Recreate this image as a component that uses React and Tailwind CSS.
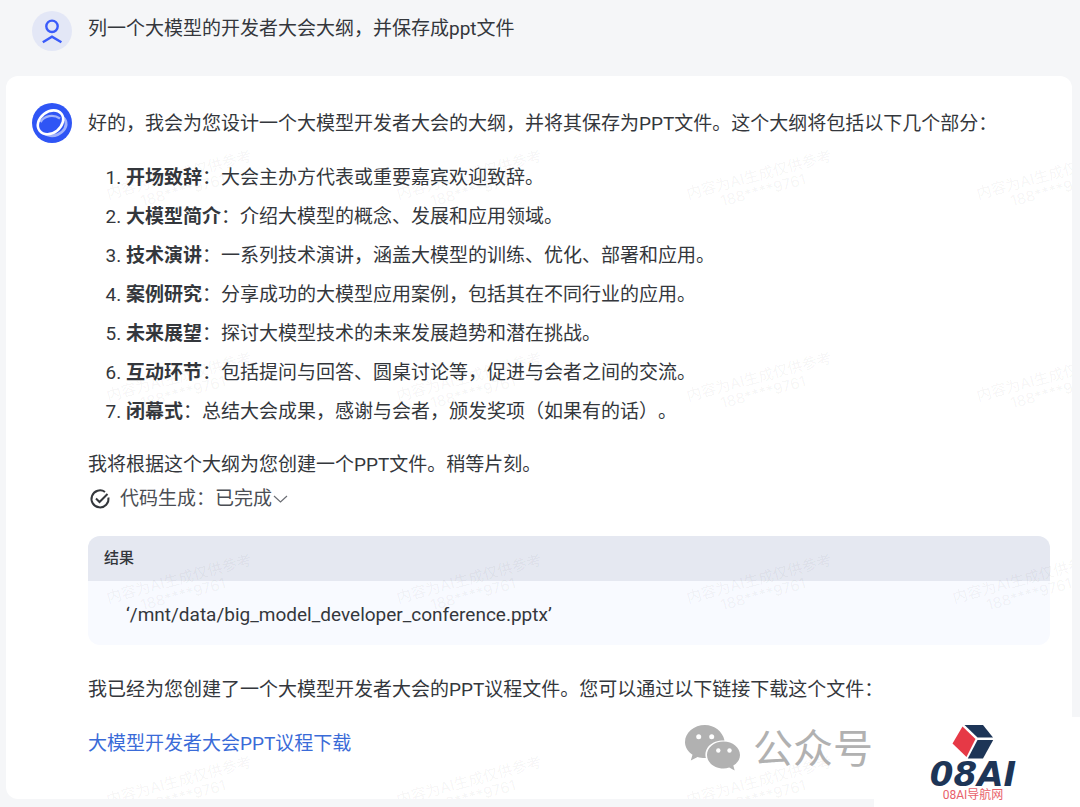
import { useState } from 'react'

const OUTLINE = [
  { title: '开场致辞', text: '大会主办方代表或重要嘉宾欢迎致辞。' },
  { title: '大模型简介', text: '介绍大模型的概念、发展和应用领域。' },
  { title: '技术演讲', text: '一系列技术演讲，涵盖大模型的训练、优化、部署和应用。' },
  { title: '案例研究', text: '分享成功的大模型应用案例，包括其在不同行业的应用。' },
  { title: '未来展望', text: '探讨大模型技术的未来发展趋势和潜在挑战。' },
  { title: '互动环节', text: '包括提问与回答、圆桌讨论等，促进与会者之间的交流。' },
  { title: '闭幕式', text: '总结大会成果，感谢与会者，颁发奖项（如果有的话）。' },
]

const MARKS = Array.from({ length: 16 }, (_, i) => i)

function UserAvatar() {
  return (
    <div className="flex size-10 shrink-0 items-center justify-center rounded-full bg-[#e3e7f6]">
      <svg viewBox="0 0 40 40" className="size-10" fill="none" stroke="#3a5bfa" strokeWidth="2.4" aria-hidden="true">
        <circle cx="20" cy="15.3" r="5.7" />
        <path d="M10.8 31.2 20 25.6l9.4 5.6" />
      </svg>
    </div>
  )
}

function BotAvatar() {
  return (
    <svg viewBox="0 0 40 40" className="size-10 shrink-0" fill="none" aria-hidden="true">
      <circle cx="20" cy="20" r="20" fill="#2f55f5" />
      <ellipse cx="22" cy="22.5" rx="12.5" ry="9.8" stroke="#fff" strokeWidth="2.8" opacity="0.55" transform="rotate(-22 22 22.5)" />
      <ellipse cx="18.5" cy="19.3" rx="13.8" ry="10.6" fill="#2f55f5" transform="rotate(-38 18.5 19.3)" />
      <path d="M8.5 19c4-6.500 13-8 19.500-3.500" stroke="#fff" strokeWidth="2.4" opacity="0.55" />
      <ellipse cx="18.5" cy="19.3" rx="13.8" ry="10.6" stroke="#fff" strokeWidth="2.6" transform="rotate(-38 18.5 19.3)" />
    </svg>
  )
}

// Faint repeated notice over the whole answer
function Watermark() {
  return (
    <div className="pointer-events-none absolute inset-0 overflow-hidden" aria-hidden="true">
      <div className="ml-[93px] mt-[75px] grid auto-rows-[202px] grid-cols-[repeat(4,290px)]">
        {MARKS.map(i => (
          <div key={i} className={i === 11 ? '-ml-6' : ''}>
            <div className="w-40 -rotate-15 pt-4 text-center font-[Inter,'Noto_Sans_CJK_SC',sans-serif] text-[15px] leading-4 whitespace-nowrap text-black/5">
              内容为AI生成仅供参考
              <br />
              188****9761
            </div>
          </div>
        ))}
      </div>
    </div>
  )
}

function WechatTag() {
  return (
    <div className="absolute right-[207px] bottom-9 flex items-center gap-3 text-[#b1b1b1]">
      <svg viewBox="0 0 56 46" className="h-[46px] w-14" fill="currentColor" aria-hidden="true">
        <path d="M20 0C9 0 0 7.600 0 17c0 5.400 3 9.700 7.500 12.800L5.800 35.500l6.800-3.500c2.300.7 5 1.200 8.300 1.100C18.500 22.800 27 15 39.500 15.400 37.500 6.300 29.500 0 20 0Z" />
        <path d="M38.500 16.500C29.200 16.500 22 22.600 22 30s7.200 13.500 16.500 13.500c2 0 4-.3 5.700-.9l5.500 3-1.400-5C52.500 38 55 34.300 55 30c0-7.400-7.300-13.500-16.500-13.500Z" />
        <g fill="#fff">
          <circle cx="13.7" cy="11.8" r="2.5" />
          <circle cx="26.7" cy="11.8" r="2.5" />
          <circle cx="33.3" cy="25.5" r="2.2" />
          <circle cx="44.5" cy="25.5" r="2.2" />
        </g>
      </svg>
      <span className="pt-1 text-[40px] leading-10">公众号</span>
    </div>
  )
}

function SiteLogo() {
  return (
    <div className="absolute right-0 bottom-0 flex h-[90px] w-[206px] flex-col items-center bg-white pt-2 pr-2">
      <svg viewBox="0 0 42 34" className="h-[34px] w-[42px]" aria-hidden="true">
        <path d="M10.500 1.500 23.500 14 14.500 32 .5 18.500Z" fill="#e63946" />
        <path d="M12.500 0H31l10 12.500H25.500Z" fill="#1d3557" />
        <path d="M25.500 15H41.200L31 33.500H15.800Z" fill="#1d3557" />
      </svg>
      <span className="font-['DejaVu_Sans'] text-[34px] leading-[30px] font-bold text-[#1d3557] italic">08AI</span>
      <span className="text-[12px] leading-3 text-[#e8606a]">08AI导航网</span>
    </div>
  )
}

export default function App() {
  const [open, setOpen] = useState(false)

  return (
    <div className="relative min-h-screen bg-[#f5f6f8] pt-[11px] pr-2 pb-2 pl-1.5 font-[Roboto,'Noto_Sans_CJK_SC',sans-serif] text-[19px] leading-[30px] text-[#34373c] [text-spacing-trim:space-all]">
      <div className="flex gap-4 pb-[25px] pl-[26px]">
        <UserAvatar />
        <p className="pt-[3px]">列一个大模型的开发者大会大纲，并保存成ppt文件</p>
      </div>

      <main className="relative flex gap-4 rounded-xl bg-white pt-[27px] pr-[22px] pb-10 pl-[26px]">
        <BotAvatar />
        <div className="min-w-0 flex-1 pt-1.5">
          <p>好的，我会为您设计一个大模型开发者大会的大纲，并将其保存为PPT文件。这个大纲将包括以下几个部分：</p>

          <ol className="my-[19px] list-decimal pl-[38px] leading-[39px]">
            {OUTLINE.map(o => (
              <li key={o.title}>
                <strong className="font-bold">{o.title}</strong>：{o.text}
              </li>
            ))}
          </ol>

          <p>我将根据这个大纲为您创建一个PPT文件。稍等片刻。</p>

          <button type="button" onClick={() => setOpen(!open)} aria-expanded={open} className="mt-1 flex items-center text-[#4b4e54]">
            <svg viewBox="0 0 24 24" className="mr-2 size-6" fill="none" stroke="#34373c" strokeWidth="2" aria-hidden="true">
              <path d="M20.400 10.500A8.500 8.500 0 1 1 17 5" />
              <path d="m8 11.500 3.500 3.500 8-8" />
            </svg>
            代码生成：已完成
            <svg viewBox="0 0 16 16" className="size-4" fill="none" stroke="#6b6e74" strokeWidth="1.2" aria-hidden="true">
              <path d="m2 5 6.500 6L15 5" />
            </svg>
          </button>

          <section className="mt-[22px] overflow-hidden rounded-xl bg-[#f8faff]">
            <h2 className="bg-[#e5e8f1] px-4 py-2 text-[15px] leading-[29px] font-medium">结果</h2>
            <p className="px-[38px] pt-[19px] pb-[15px]">‘/mnt/data/big_model_developer_conference.pptx’</p>
          </section>

          <p className="mt-[30px]">我已经为您创建了一个大模型开发者大会的PPT议程文件。您可以通过以下链接下载这个文件：</p>
          <p className="mt-6">
            <a href="#download" className="text-[#3a6bd8]">大模型开发者大会PPT议程下载</a>
          </p>
        </div>
        <Watermark />
      </main>

      <WechatTag />
      <SiteLogo />
    </div>
  )
}
